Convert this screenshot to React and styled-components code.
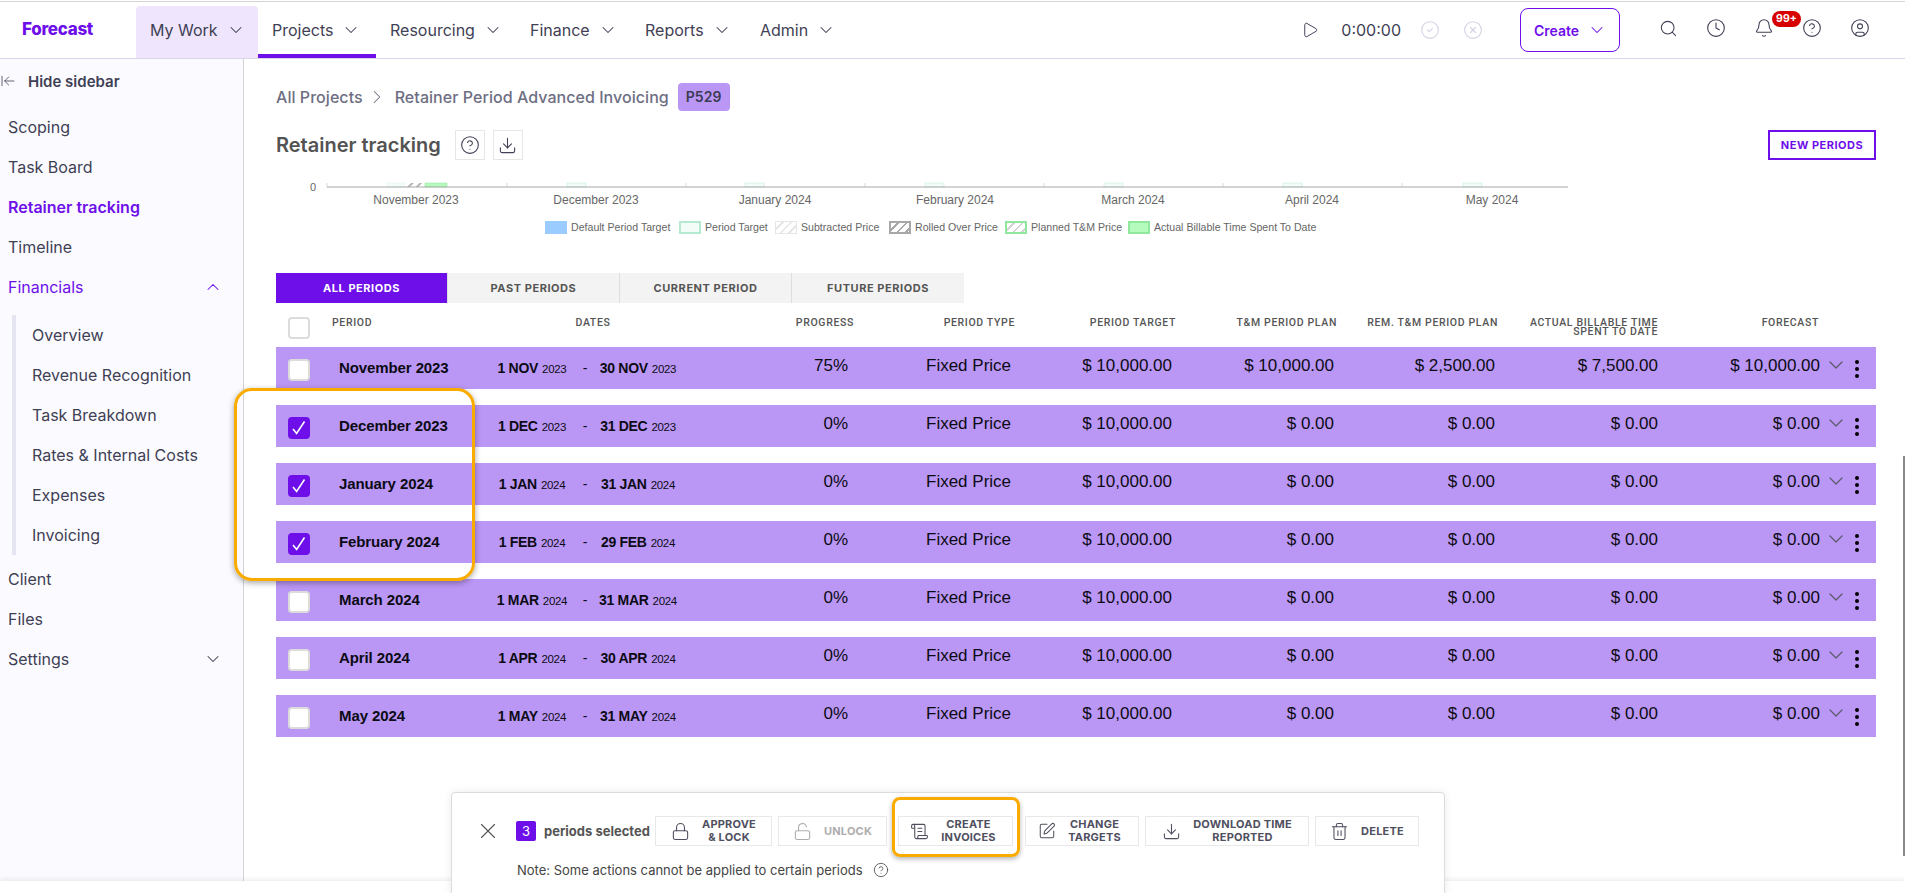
import React from 'react';
import styled, { createGlobalStyle } from 'styled-components';
import {
  ArrowLeftToLine,
  ChevronDown,
  ChevronRight,
  ChevronUp,
  CircleCheck,
  CircleHelp,
  CircleUser,
  CircleX,
  Clock,
  Bell,
  Download,
  Lock,
  LockOpen,
  Play,
  ScrollText,
  Search,
  SquarePen,
  Trash2,
  X,
} from 'lucide-react';

const PURPLE = '#6e0fea';
const ROW = '#bb97f5';
const ORANGE = '#f9ab00';
const SANS = '"Inter", "Liberation Sans", sans-serif';
const GROTESK = '"Liberation Sans", Arial, sans-serif';

const GlobalStyle = createGlobalStyle`
  html, body {
    margin: 0;
    padding: 0;
    background: #fff;
    font-family: ${SANS};
    overflow: hidden;
  }
  * {
    box-sizing: border-box;
  }
`;

const Page = styled.div`
  position: relative;
  display: flex;
  flex-direction: column;
  height: 100vh;
  padding-top: 1px;
  overflow: hidden;
`;

const TopBar = styled.header`
  display: flex;
  align-items: stretch;
  flex: none;
  height: 58px;
  border-top: 1px solid #d4d4d4;
  border-bottom: 1px solid #d8d5e8;
  background: #fff;
`;

const Logo = styled.div`
  width: 136px;
  padding: 0 0 2px 22px;
  display: flex;
  align-items: center;
  font-size: 17px;
  font-weight: 800;
  letter-spacing: -0.3px;
  color: ${PURPLE};
`;

const NavItem = styled.div`
  display: flex;
  align-items: center;
  gap: 8px;
  width: ${p => p.$w}px;
  margin-top: 4px;
  padding: 0 0 5px 14px;
  font-size: 16px;
  color: #3f3f55;
  background: ${p => (p.$open ? '#efe6fd' : 'transparent')};
  border-radius: ${p => (p.$open ? '4px 4px 0 0' : '0')};
  border-bottom: 4px solid ${p => (p.$active ? PURPLE : 'transparent')};
  border-bottom-width: ${p => (p.$active ? '4px' : '0')};
  padding-bottom: ${p => (p.$active ? '1px' : '5px')};
`;

const TopActions = styled.div`
  display: flex;
  align-items: center;
  margin-left: auto;
  padding-right: 35px;
  color: #3f3f55;
`;

const Timer = styled.span`
  margin: 0 19px 0 22px;
  font-size: 16px;
  color: #3f3f55;
`;

const FadedIcon = styled.span`
  display: flex;
  margin-right: ${p => p.$gap}px;
  color: #d3d1e4;
`;

const CreateButton = styled.button`
  display: flex;
  align-items: center;
  gap: 8px;
  width: 100px;
  height: 44px;
  margin-right: 38.5px;
  padding: 0 0 0 13px;
  border: 1.5px solid ${PURPLE};
  border-radius: 8px;
  background: #fff;
  color: ${PURPLE};
  font-family: ${SANS};
  font-size: 14px;
  font-weight: 600;
`;

const TopIcon = styled.span`
  position: relative;
  display: flex;
  margin-left: ${p => p.$gap || 0}px;
  margin-top: -4px;
`;

const Badge = styled.span`
  position: absolute;
  left: 18px;
  top: -7px;
  width: 29px;
  height: 16px;
  border-radius: 8px;
  background: #d60000;
  color: #fff;
  font-size: 10.5px;
  font-weight: 700;
  line-height: 16px;
  text-align: center;
`;

const Body = styled.div`
  display: flex;
  flex: 1;
  min-height: 0;
`;

const Sidebar = styled.aside`
  flex: none;
  width: 244px;
  padding-top: 2px;
  border-right: 1px solid #d2d2dc;
  background: #fbfbff;
`;

const HideRow = styled.div`
  display: flex;
  align-items: center;
  gap: 12px;
  height: 40px;
  margin-bottom: 6px;
  font-size: 15px;
  font-weight: 600;
  color: #3f3f55;
`;

const SideItem = styled.div`
  display: flex;
  align-items: center;
  justify-content: space-between;
  height: 40px;
  padding: 0 20px 0 8px;
  font-size: 16px;
  font-weight: ${p => (p.$current ? 600 : 400)};
  color: ${p => (p.$current || p.$purple ? PURPLE : '#3f3f55')};
`;

const SubList = styled.div`
  margin: 8px 0 4px 12px;
  border-left: 4px solid #e5e5f2;
`;

const SubItem = styled.div`
  display: flex;
  align-items: center;
  height: 40px;
  padding-left: 16px;
  font-size: 16px;
  color: #3f3f55;
`;

const Main = styled.main`
  flex: 1;
  min-width: 0;
  padding: 24px 29px 0 32px;
  background: #fff;
`;

const Crumbs = styled.div`
  display: flex;
  align-items: center;
  height: 28px;
  font-size: 16px;
  font-weight: 500;
  letter-spacing: 0.05px;
  color: #6e6e83;
`;

const CrumbArrow = styled.span`
  display: flex;
  margin: 0 7px 0 3px;
`;

const CodeTag = styled.span`
  margin-left: 9px;
  padding: 0 8px;
  height: 28px;
  line-height: 28px;
  border-radius: 4px;
  background: ${ROW};
  color: #3b3b54;
  font-size: 14px;
  font-weight: 600;
`;

const TitleRow = styled.div`
  display: flex;
  align-items: center;
  margin-top: 19px;
  height: 30px;
`;

const Title = styled.h1`
  margin: 0 14px 0 0;
  font-size: 20px;
  font-weight: 600;
  color: #535353;
`;

const SquareButton = styled.span`
  display: flex;
  align-items: center;
  justify-content: center;
  width: 30px;
  height: 30px;
  margin-right: 8px;
  border: 1px solid #e6e6e6;
  color: #3f3f55;
`;

const NewPeriods = styled.button`
  margin-left: auto;
  width: 108px;
  height: 30px;
  padding: 0;
  border: 2px solid ${PURPLE};
  background: #fff;
  color: ${PURPLE};
  font-family: ${SANS};
  font-size: 11px;
  font-weight: 700;
  letter-spacing: 0.5px;
`;

const ChartSvg = styled.svg`
  display: block;
  margin-top: 15px;
`;

const Legend = styled.div`
  display: flex;
  margin: 9px 0 39px 269px;
  height: 13px;
  font-family: ${GROTESK};
  font-size: 10.6px;
  line-height: 13px;
  color: #666;
`;

const LegendItem = styled.div`
  display: flex;
  gap: 4px;
  width: ${p => p.$w}px;
  white-space: nowrap;
`;

const swatches = {
  base: 'background: #9accff;',
  target: 'background: #f3fcf7; border: 2px solid #b6ead0;',
  subtracted:
    'background: repeating-linear-gradient(135deg, #fff 0 4px, #e6e6e6 4px 6px); border: 1px solid #e6e6e6;',
  rolled:
    'background: repeating-linear-gradient(135deg, #fff 0 4px, #a8a8a8 4px 6px); border: 2px solid #a8a8a8;',
  planned:
    'background: repeating-linear-gradient(135deg, #fff 0 4px, #d4d4d4 4px 6px); border: 2px solid #90e89e;',
  actual: 'background: #b5fbbd; border: 2px solid #90e89e;',
};

const Swatch = styled.span`
  flex: none;
  width: 22px;
  height: 13px;
  ${p => swatches[p.$kind]}
`;

const Tabs = styled.div`
  display: flex;
  height: 30px;
`;

const Tab = styled.div`
  display: flex;
  align-items: center;
  justify-content: center;
  width: 172px;
  border-right: 1px solid #dedede;
  background: ${p => (p.$active ? PURPLE : '#f3f3f3')};
  color: ${p => (p.$active ? '#fff' : '#555')};
  font-size: 11px;
  font-weight: 700;
  letter-spacing: 0.55px;
  &:last-child {
    border-right: 0;
  }
`;

const HeadRow = styled.div`
  display: grid;
  grid-template-columns: 56px 168px 186px 168px 161px 161px 161px 161px 160px 161px;
  height: 44px;
  padding-top: 15px;
  font-family: "Roboto", ${GROTESK};
  font-size: 10.5px;
  font-weight: 500;
  line-height: 9px;
  letter-spacing: 0.65px;
  color: #555;
`;

const HeadCell = styled.div`
  text-align: ${p => p.$align || 'left'};
  white-space: pre-line;
`;

const Box = styled.span`
  display: flex;
  align-items: center;
  justify-content: center;
  width: 22px;
  height: 22px;
  margin-left: 12px;
  border-radius: 4px;
  border: 2px solid ${p => (p.$checked ? PURPLE : '#dcdcdc')};
  background: ${p => (p.$checked ? PURPLE : '#fff')};
`;

const HeadBox = styled(Box)`
  margin-top: -1px;
`;

const Rows = styled.div`
  display: flex;
  flex-direction: column;
  gap: 16px;
`;

const Row = styled.div`
  display: grid;
  grid-template-columns: 63px 146px 200px 163px 164px 160px 162px 161px 163px 162px 56px;
  align-items: center;
  height: 42px;
  background: ${ROW};
  font-family: ${GROTESK};
  color: #0b0b14;
`;

const CheckCell = styled.div`
  padding-top: 4px;
`;

const PeriodName = styled.div`
  padding-bottom: 2px;
  font-size: 15px;
  font-weight: 700;
  letter-spacing: -0.1px;
`;

const DateRange = styled.div`
  display: grid;
  grid-template-columns: 94px 12px 94px;
  align-items: baseline;
  text-align: center;
  font-size: 14px;
  font-weight: 700;
  letter-spacing: -0.3px;
`;

const DateYear = styled.span`
  margin-left: 4px;
  font-size: 11.5px;
  font-weight: 400;
`;

const DateDash = styled.span`
  font-weight: 400;
`;

const Value = styled.div`
  padding-bottom: 4px;
  padding-left: ${p => p.$pad || 0}px;
  text-align: ${p => p.$align || 'right'};
  font-size: 17px;
  white-space: nowrap;
`;

const RowEnd = styled.div`
  display: flex;
  align-items: center;
  padding-left: 4px;
  color: #5b5b6b;
`;

const FoldIcon = styled.span`
  display: flex;
  margin-bottom: 6px;
`;

const Dots = styled.span`
  display: flex;
  flex-direction: column;
  gap: 3px;
  margin: 1px 0 0 7px;
`;

const Dot = styled.i`
  display: block;
  width: 4px;
  height: 4px;
  border-radius: 50%;
  background: #000;
`;

const RowsCallout = styled.div`
  position: absolute;
  left: 234px;
  top: 388px;
  width: 241px;
  height: 193px;
  border: 3px solid ${ORANGE};
  border-radius: 18px;
  box-shadow: 0 2px 6px rgba(0, 0, 0, 0.35);
  pointer-events: none;
`;

const ScrollThumb = styled.div`
  position: absolute;
  right: 0;
  top: 456px;
  width: 2px;
  height: 400px;
  background: #8a8a8a;
`;

const BottomEdge = styled.div`
  flex: none;
  height: 12px;
  background: #fff;
  box-shadow: 0 -2px 5px rgba(0, 0, 0, 0.07);
`;

const ActionBar = styled.div`
  position: absolute;
  left: 451px;
  top: 792px;
  width: 994px;
  height: 110px;
  padding: 23px 0 0 23px;
  border: 1px solid #dcdcdc;
  border-radius: 4px;
  background: #fff;
  box-shadow: 0 0 10px rgba(0, 0, 0, 0.08);
`;

const ActionRow = styled.div`
  display: flex;
  align-items: center;
  gap: 6px;
  height: 30px;
`;

const CloseIcon = styled.span`
  display: flex;
  color: #555;
  margin-right: 9px;
`;

const CountBadge = styled.span`
  width: 20px;
  height: 20px;
  margin-right: 2px;
  border-radius: 2px;
  background: ${PURPLE};
  color: #fff;
  font-size: 13px;
  line-height: 20px;
  text-align: center;
`;

const SelectedText = styled.span`
  width: 105px;
  font-size: 13px;
  font-weight: 700;
  white-space: nowrap;
  color: #555;
`;

const ActionButton = styled.div`
  position: relative;
  display: flex;
  align-items: center;
  justify-content: center;
  gap: 12px;
  flex: none;
  width: ${p => p.$w}px;
  height: 30px;
  padding-right: ${p => p.$nudge || 0}px;
  margin: ${p => (p.$highlight ? '0 6px 0 5px' : '0')};
  border: 1px solid #e8e8e8;
  font-size: 11px;
  font-weight: 700;
  line-height: 13px;
  letter-spacing: 0.2px;
  text-align: center;
  color: ${p => (p.$disabled ? '#adadad' : '#4f4f5f')};

  ${p =>
    p.$highlight &&
    `&::after {
      content: '';
      position: absolute;
      inset: -20px -8px -12px -7px;
      border: 3px solid ${ORANGE};
      border-radius: 8px;
      box-shadow: 0 2px 5px rgba(0, 0, 0, 0.3);
    }`}
`;

const Note = styled.div`
  display: flex;
  align-items: center;
  gap: 10px;
  margin: 16px 0 0 42px;
  font-size: 13px;
  color: #444;
`;

const CheckMark = () => (
  <svg width="16" height="16" viewBox="0 0 16 16" fill="none">
    <path d="M2 9 5.6 13.4 13.5 1.5" stroke="#fff" strokeWidth="1.6" />
  </svg>
);

const Chevron = ({ size = 20, up }) =>
  up ? <ChevronUp size={size} strokeWidth={1.25} /> : <ChevronDown size={size} strokeWidth={1.25} />;

const months = [
  ['November 2023', 416],
  ['December 2023', 596],
  ['January 2024', 775],
  ['February 2024', 955],
  ['March 2024', 1133],
  ['April 2024', 1312],
  ['May 2024', 1492],
];
const ticks = [327, 507, 686, 865, 1044, 1223, 1402];
const stubs = [567, 745, 925, 1104, 1283, 1463];

const RetainerChart = () => (
  <ChartSvg width="1300" height="37" viewBox="276 175 1300 37">
    <defs>
      <pattern id="rolled" width="6" height="6" patternUnits="userSpaceOnUse" patternTransform="rotate(45)">
        <rect width="6" height="6" fill="#fff" />
        <rect width="2" height="6" fill="#b5b5b5" />
      </pattern>
    </defs>
    <text x="316" y="191" textAnchor="end" fontFamily={GROTESK} fontSize="11" fill="#666">
      0
    </text>
    <rect x="387" y="183" width="18" height="4" fill="#f3fcf7" stroke="#dff6e9" strokeWidth="0.5" />
    <rect x="405" y="183" width="20" height="4" fill="url(#rolled)" />
    <rect x="425" y="183" width="22" height="4" fill="#b5fbbd" stroke="#90e89e" strokeWidth="0.5" />
    {stubs.map(x => (
      <rect key={x} x={x} y="183" width="19" height="4" fill="#f3fcf7" stroke="#b6ead0" strokeWidth="0.5" />
    ))}
    {ticks.map(x => (
      <line key={x} x1={x} x2={x} y1="183" y2="187" stroke="#d8d8d8" />
    ))}
    <line x1="327" x2="1568" y1="187" y2="187" stroke="#a8a8a8" strokeWidth="1.2" />
    {months.map(([label, x]) => (
      <text key={label} x={x} y="204" textAnchor="middle" fontFamily={GROTESK} fontSize="12" fill="#666">
        {label}
      </text>
    ))}
  </ChartSvg>
);

const legend = [
  ['base', 'Default Period Target', 134],
  ['target', 'Period Target', 96],
  ['subtracted', 'Subtracted Price', 114],
  ['rolled', 'Rolled Over Price', 116],
  ['planned', 'Planned T&M Price', 123],
  ['actual', 'Actual Billable Time Spent To Date', 190],
];

const heads = [
  ['PERIOD', 'left'],
  ['DATES', 'center'],
  ['PROGRESS', 'right'],
  ['PERIOD TYPE', 'right'],
  ['PERIOD TARGET', 'right'],
  ['T&M PERIOD PLAN', 'right'],
  ['REM. T&M PERIOD PLAN', 'right'],
  ['ACTUAL BILLABLE TIME\nSPENT TO DATE', 'right'],
  ['FORECAST', 'right'],
];

const periods = [
  { name: 'November 2023', from: '1 NOV', to: '30 NOV', year: '2023', progress: '75%', plan: '$ 10,000.00', rem: '$ 2,500.00', actual: '$ 7,500.00', forecast: '$ 10,000.00' },
  { name: 'December 2023', from: '1 DEC', to: '31 DEC', year: '2023', checked: true },
  { name: 'January 2024', from: '1 JAN', to: '31 JAN', year: '2024', checked: true },
  { name: 'February 2024', from: '1 FEB', to: '29 FEB', year: '2024', checked: true },
  { name: 'March 2024', from: '1 MAR', to: '31 MAR', year: '2024' },
  { name: 'April 2024', from: '1 APR', to: '30 APR', year: '2024' },
  { name: 'May 2024', from: '1 MAY', to: '31 MAY', year: '2024' },
];

const ZERO = '$ 0.00';

const nav = [
  ['My Work', 122, true, false],
  ['Projects', 118, false, true],
  ['Resourcing', 140, false, false],
  ['Finance', 115, false, false],
  ['Reports', 115, false, false],
  ['Admin', 100, false, false],
];

const iconProps = { size: 20, strokeWidth: 1.3 };
const actionIcon = { size: 19, strokeWidth: 1.35 };

export default function App() {
  return (
    <Page>
      <GlobalStyle />
      <TopBar>
        <Logo>Forecast</Logo>
        {nav.map(([label, w, open, active]) => (
          <NavItem key={label} $w={w} $open={open} $active={active}>
            {label}
            <Chevron />
          </NavItem>
        ))}
        <TopActions>
          <Play size={18} strokeWidth={1.3} />
          <Timer>0:00:00</Timer>
          <FadedIcon $gap={23}>
            <CircleCheck {...iconProps} />
          </FadedIcon>
          <FadedIcon $gap={37}>
            <CircleX {...iconProps} />
          </FadedIcon>
          <CreateButton>
            Create
            <Chevron />
          </CreateButton>
          <TopIcon>
            <Search size={19} strokeWidth={1.3} />
          </TopIcon>
          <TopIcon $gap={28.5}>
            <Clock {...iconProps} />
          </TopIcon>
          <TopIcon $gap={28}>
            <Bell {...iconProps} />
            <Badge>99+</Badge>
          </TopIcon>
          <TopIcon $gap={28}>
            <CircleHelp {...iconProps} />
          </TopIcon>
          <TopIcon $gap={28}>
            <CircleUser {...iconProps} />
          </TopIcon>
        </TopActions>
      </TopBar>

      <Body>
        <Sidebar>
          <HideRow>
            <ArrowLeftToLine size={16} strokeWidth={1.2} />
            Hide sidebar
          </HideRow>
          <SideItem>Scoping</SideItem>
          <SideItem>Task Board</SideItem>
          <SideItem $current>Retainer tracking</SideItem>
          <SideItem>Timeline</SideItem>
          <SideItem $purple>
            Financials
            <Chevron up />
          </SideItem>
          <SubList>
            <SubItem>Overview</SubItem>
            <SubItem>Revenue Recognition</SubItem>
            <SubItem>Task Breakdown</SubItem>
            <SubItem>Rates &amp; Internal Costs</SubItem>
            <SubItem>Expenses</SubItem>
            <SubItem>Invoicing</SubItem>
          </SubList>
          <SideItem>Client</SideItem>
          <SideItem>Files</SideItem>
          <SideItem>
            Settings
            <Chevron />
          </SideItem>
        </Sidebar>

        <Main>
          <Crumbs>
            All Projects
            <CrumbArrow>
              <ChevronRight size={22} strokeWidth={1.1} />
            </CrumbArrow>
            Retainer Period Advanced Invoicing
            <CodeTag>P529</CodeTag>
          </Crumbs>

          <TitleRow>
            <Title>Retainer tracking</Title>
            <SquareButton>
              <CircleHelp {...iconProps} />
            </SquareButton>
            <SquareButton>
              <Download {...actionIcon} />
            </SquareButton>
            <NewPeriods>NEW PERIODS</NewPeriods>
          </TitleRow>

          <RetainerChart />
          <Legend>
            {legend.map(([kind, label, w]) => (
              <LegendItem key={kind} $w={w}>
                <Swatch $kind={kind} />
                {label}
              </LegendItem>
            ))}
          </Legend>

          <Tabs>
            <Tab $active>ALL PERIODS</Tab>
            <Tab>PAST PERIODS</Tab>
            <Tab>CURRENT PERIOD</Tab>
            <Tab>FUTURE PERIODS</Tab>
          </Tabs>

          <HeadRow>
            <HeadBox />
            {heads.map(([label, align]) => (
              <HeadCell key={label} $align={align}>
                {label}
              </HeadCell>
            ))}
          </HeadRow>

          <Rows>
            {periods.map(p => (
              <Row key={p.name}>
                <CheckCell>
                  <Box $checked={p.checked}>{p.checked && <CheckMark />}</Box>
                </CheckCell>
                <PeriodName>{p.name}</PeriodName>
                <DateRange>
                  <span>
                    {p.from}
                    <DateYear>{p.year}</DateYear>
                  </span>
                  <DateDash>-</DateDash>
                  <span>
                    {p.to}
                    <DateYear>{p.year}</DateYear>
                  </span>
                </DateRange>
                <Value>{p.progress || '0%'}</Value>
                <Value $align="left" $pad={78}>
                  Fixed Price
                </Value>
                <Value>$ 10,000.00</Value>
                <Value>{p.plan || ZERO}</Value>
                <Value>{p.rem || ZERO}</Value>
                <Value>{p.actual || ZERO}</Value>
                <Value>{p.forecast || ZERO}</Value>
                <RowEnd>
                  <FoldIcon>
                    <Chevron size={24} />
                  </FoldIcon>
                  <Dots>
                    <Dot />
                    <Dot />
                    <Dot />
                  </Dots>
                </RowEnd>
              </Row>
            ))}
          </Rows>
        </Main>
      </Body>
      <BottomEdge />

      <RowsCallout />
      <ScrollThumb />

      <ActionBar>
        <ActionRow>
          <CloseIcon>
            <X size={26} strokeWidth={1} />
          </CloseIcon>
          <CountBadge>3</CountBadge>
          <SelectedText>periods selected</SelectedText>
          <ActionButton $w={117}>
            <Lock {...actionIcon} />
            <span>
              APPROVE
              <br />
              &amp; LOCK
            </span>
          </ActionButton>
          <ActionButton $w={109} $disabled>
            <LockOpen {...actionIcon} />
            UNLOCK
          </ActionButton>
          <ActionButton $w={115} $highlight $nudge={5}>
            <ScrollText {...actionIcon} />
            <span>
              CREATE
              <br />
              INVOICES
            </span>
          </ActionButton>
          <ActionButton $w={114} $nudge={5}>
            <SquarePen size={18} strokeWidth={1.35} />
            <span>
              CHANGE
              <br />
              TARGETS
            </span>
          </ActionButton>
          <ActionButton $w={164}>
            <Download {...actionIcon} />
            <span>
              DOWNLOAD TIME
              <br />
              REPORTED
            </span>
          </ActionButton>
          <ActionButton $w={104}>
            <Trash2 {...actionIcon} />
            DELETE
          </ActionButton>
        </ActionRow>
        <Note>
          Note: Some actions cannot be applied to certain periods
          <CircleHelp size={16} strokeWidth={1.2} />
        </Note>
      </ActionBar>
    </Page>
  );
}
